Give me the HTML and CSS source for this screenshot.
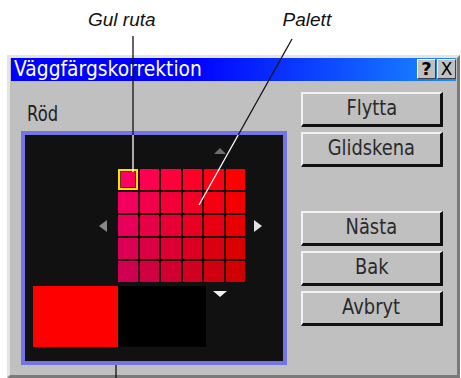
FILE: index.html
```html
<!DOCTYPE html>
<html lang="sv">
<head>
    <meta charset="UTF-8">
    <meta name="viewport" content="width=device-width, initial-scale=1.0">
    <title>Väggfärgskorrektion</title>
    <link rel="stylesheet" href="styles.css">
</head>
<body>
    <div class="callouts">
        <span class="callout">Gul ruta</span>
        <span class="callout callout-palett">Palett</span>
    </div>

    <div class="window">
        <div class="titlebar">
            <span class="title"><span>Väggfärgskorrektion</span></span>
            <div class="title-buttons">
                <span class="tbtn">?</span>
                <span class="tbtn tbtn-close">X</span>
            </div>
        </div>

        <div class="content">
            <div class="left-col">
                <div class="label"><span>Röd</span></div>
                <div class="panel">
                    <div class="up-row"><span class="arrow arrow-up"></span></div>
                    <div class="mid-row">
                        <span class="arrow arrow-left"></span>
                        <div id="palette" class="palette"></div>
                        <span class="arrow arrow-right"></span>
                    </div>
                    <div class="bottom-row">
                        <div class="swatch swatch-red"></div>
                        <div class="swatch swatch-black"></div>
                        <span class="arrow arrow-down"></span>
                    </div>
                </div>
            </div>

            <div class="buttons">
                <button class="btn"><span>Flytta</span></button>
                <button class="btn"><span>Glidskena</span></button>
                <button class="btn btn-next"><span>Nästa</span></button>
                <button class="btn"><span>Bak</span></button>
                <button class="btn"><span>Avbryt</span></button>
            </div>
        </div>
    </div>

    <!-- leader lines for the callouts -->
    <svg class="leaders" width="461" height="378" viewBox="0 0 461 378">
        <line x1="133" y1="36" x2="133" y2="135" stroke="#111" stroke-width="1.3"/>
        <line x1="133" y1="135" x2="133" y2="172" stroke="#fff" stroke-width="1.3"/>
        <line x1="292" y1="39" x2="238.2" y2="135" stroke="#111" stroke-width="1.3"/>
        <line x1="238.2" y1="135" x2="199" y2="205" stroke="#fff" stroke-width="1.3"/>
        <line x1="116" y1="365" x2="116" y2="378" stroke="#111" stroke-width="1.3"/>
    </svg>

    <script>
        const palette = document.getElementById('palette');
        for (let row = 0; row < 5; row++) {
            for (let col = 0; col < 6; col++) {
                const red = 255 - row * 12;
                const blue = Math.round((5 - col) * 20 * red / 255);
                const cell = document.createElement('div');
                cell.className = 'cell';
                if (row === 0 && col === 0) {
                    cell.classList.add('selected');
                }
                cell.style.backgroundColor = `rgb(${red}, 0, ${blue})`;
                palette.appendChild(cell);
            }
        }
    </script>
</body>
</html>
```

FILE: styles.css
```css
body {
    margin: 0;
    background-color: #fff;
    font-family: "DejaVu Sans", sans-serif;
    position: relative;
    width: 461px;
    height: 378px;
    overflow: hidden;
}

.callouts {
    height: 55px;
    box-sizing: border-box;
    padding: 9px 0 0 88px;
    display: flex;
}

.callout {
    font-family: "Liberation Sans", Arial, sans-serif;
    font-style: italic;
    font-size: 19px;
    line-height: 22px;
    color: #111;
}

.callout-palett {
    margin-left: 127px;
}

.window {
    margin-left: 7px;
    width: 453px;
    height: 323px;
    box-sizing: border-box;
    background-color: #c0c0c0;
    border-top: 3px solid #e4e4e4;
    border-left: 3px solid #e4e4e4;
    border-right: 3px solid #7a7a7a;
    border-bottom: 3px solid #7a7a7a;
    padding: 0 1px;
}

.titlebar {
    height: 23px;
    display: flex;
    align-items: center;
    justify-content: space-between;
    background: linear-gradient(90deg, #0000ff 40%, #1a8cff 100%);
    padding-left: 3px;
}

.title {
    color: #fff;
    font-size: 21px;
    line-height: 23px;
    white-space: nowrap;
}

.title span {
    display: inline-block;
    transform: scaleX(0.89);
    transform-origin: left center;
}

.title-buttons {
    display: flex;
    gap: 1px;
    align-self: flex-start;
    margin-top: 1px;
}

.tbtn {
    width: 19px;
    height: 20px;
    box-sizing: border-box;
    background-color: #c0c0c0;
    border-top: 1px solid #fff;
    border-left: 1px solid #fff;
    border-right: 1px solid #404040;
    border-bottom: 1px solid #404040;
    font-size: 18px;
    font-weight: bold;
    line-height: 18px;
    text-align: center;
    color: #000;
}

.tbtn-close {
    font-weight: normal;
    font-size: 17px;
}

.content {
    display: flex;
    padding: 11px 0 0 10px;
    gap: 14px;
}

.label {
    height: 34px;
    padding-top: 10px;
    box-sizing: border-box;
    padding-left: 6px;
    font-size: 21px;
    line-height: 24px;
    color: #222;
}

.label span {
    display: inline-block;
    transform: scaleX(0.78);
    transform-origin: left center;
}

.panel {
    margin-top: 5px;
    width: 266px;
    height: 234px;
    box-sizing: border-box;
    border: 4px solid #7474e4;
    background-color: #111;
}

.up-row {
    display: flex;
    padding: 13px 0 0 189px;
}

.mid-row {
    display: flex;
    align-items: center;
    margin-top: 15px;
    padding-left: 74px;
}

.bottom-row {
    display: flex;
    align-items: flex-start;
    margin-top: 4px;
    padding-left: 8px;
}

.arrow {
    width: 0;
    height: 0;
    display: block;
}

.arrow-up {
    border-left: 6px solid transparent;
    border-right: 6px solid transparent;
    border-bottom: 6px solid #6e6e6e;
}

.arrow-down {
    margin: 5px 0 0 7px;
    border-left: 7px solid transparent;
    border-right: 7px solid transparent;
    border-top: 6px solid #f0f0f0;
}

.arrow-left {
    margin-right: 11px;
    border-top: 6.5px solid transparent;
    border-bottom: 6.5px solid transparent;
    border-right: 8px solid #888;
}

.arrow-right {
    margin-left: 9px;
    border-top: 6.5px solid transparent;
    border-bottom: 6.5px solid transparent;
    border-left: 8px solid #e0e0e0;
}

.palette {
    width: 127px;
    height: 113px;
    display: grid;
    grid-template-columns: repeat(6, 1fr);
    grid-template-rows: repeat(5, 1fr);
    gap: 2px;
    background-color: #2c0008;
}

.cell.selected {
    box-shadow: inset 0 0 0 2px #f2e400, inset 0 0 0 3px #6a2a00;
}

.swatch {
    height: 61px;
}

.swatch-red {
    width: 85px;
    background-color: #ff0000;
}

.swatch-black {
    width: 88px;
    background-color: #000;
}

.buttons {
    display: flex;
    flex-direction: column;
    gap: 5px;
}

.btn {
    width: 142px;
    height: 35px;
    box-sizing: border-box;
    padding: 0 0 2px 0;
    background-color: #c0c0c0;
    border-top: 2px solid #f2f2f2;
    border-left: 2px solid #f2f2f2;
    border-right: 3px solid #111;
    border-bottom: 3px solid #111;
    font-family: "DejaVu Sans", sans-serif;
    font-size: 21px;
    line-height: 24px;
    color: #2a2a2a;
    cursor: pointer;
}

.btn span {
    display: inline-block;
    transform: scaleX(0.85);
}

.btn-next {
    margin-top: 39px;
}

.leaders {
    position: absolute;
    top: 0;
    left: 0;
    pointer-events: none;
}
```
